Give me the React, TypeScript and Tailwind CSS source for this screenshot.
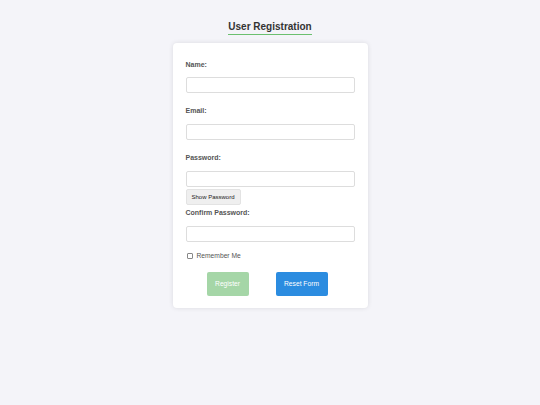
import { useState } from 'react';

function Field({ label, type, first }: { label: string; type: string; first?: boolean }) {
  return (
    <>
      <label className={`block text-[7px] font-bold leading-[8px] text-[#555] ${first ? '' : 'mt-[14px]'}`}>{label}</label>
      <input
        type={type}
        className={`block h-[16px] w-full rounded-[2px] border border-[#ddd] bg-white px-[4px] text-[7px] outline-none ${first ? 'mt-[8px]' : 'mt-[9px]'}`}
      />
    </>
  );
}

export default function App() {
  const [showPassword, setShowPassword] = useState(false);

  return (
    <div className="min-h-[405px] bg-[#f4f4f9] pt-[21px] font-['Liberation_Sans',Arial,sans-serif] text-[#333]">
      <div className="flex justify-center">
        <h1 className="border-b border-[#6cc070] pb-[1px] text-[10px] font-bold leading-[12px] text-[#333]">User Registration</h1>
      </div>

      <form className="mx-auto mt-[8px] w-[195px] rounded-[4px] bg-white px-[13px] pt-[18px] pb-[12px] shadow-[0_0_5px_rgba(0,0,0,0.1)]">
        <Field label="Name:" type="text" first />
        <Field label="Email:" type="email" />
        <Field label="Password:" type={showPassword ? 'text' : 'password'} />
        <button
          type="button"
          onClick={() => setShowPassword(!showPassword)}
          className="mt-[2px] block h-[16px] rounded-[2px] border border-[#e3e3e3] bg-[#efefef] px-[5px] text-[6px] leading-none text-[#222]"
        >
          Show Password
        </button>
        <label className="mt-[4px] block text-[7px] font-bold leading-[8px] text-[#555]">Confirm Password:</label>
        <input
          type="password"
          className="mt-[9px] block h-[16px] w-full rounded-[2px] border border-[#ddd] bg-white px-[4px] text-[7px] outline-none"
        />

        <div className="mt-[10px] flex h-[8px] items-center pl-[1px]">
          <span className="h-[6px] w-[6px] rounded-[1px] border border-[#888] bg-white" />
          <span className="ml-[4px] text-[6.7px] leading-[8px] text-[#555]">Remember Me</span>
        </div>

        <div className="mt-[12px] flex gap-[27px] pl-[21px]">
          <button type="button" disabled className="h-[24px] w-[42px] rounded-[2px] bg-[#a5d6a7] text-[6.7px] text-white">
            Register
          </button>
          <button type="reset" className="h-[24px] w-[52px] rounded-[2px] bg-[#2b8ce0] text-[6.7px] text-white">
            Reset Form
          </button>
        </div>
      </form>
    </div>
  );
}
